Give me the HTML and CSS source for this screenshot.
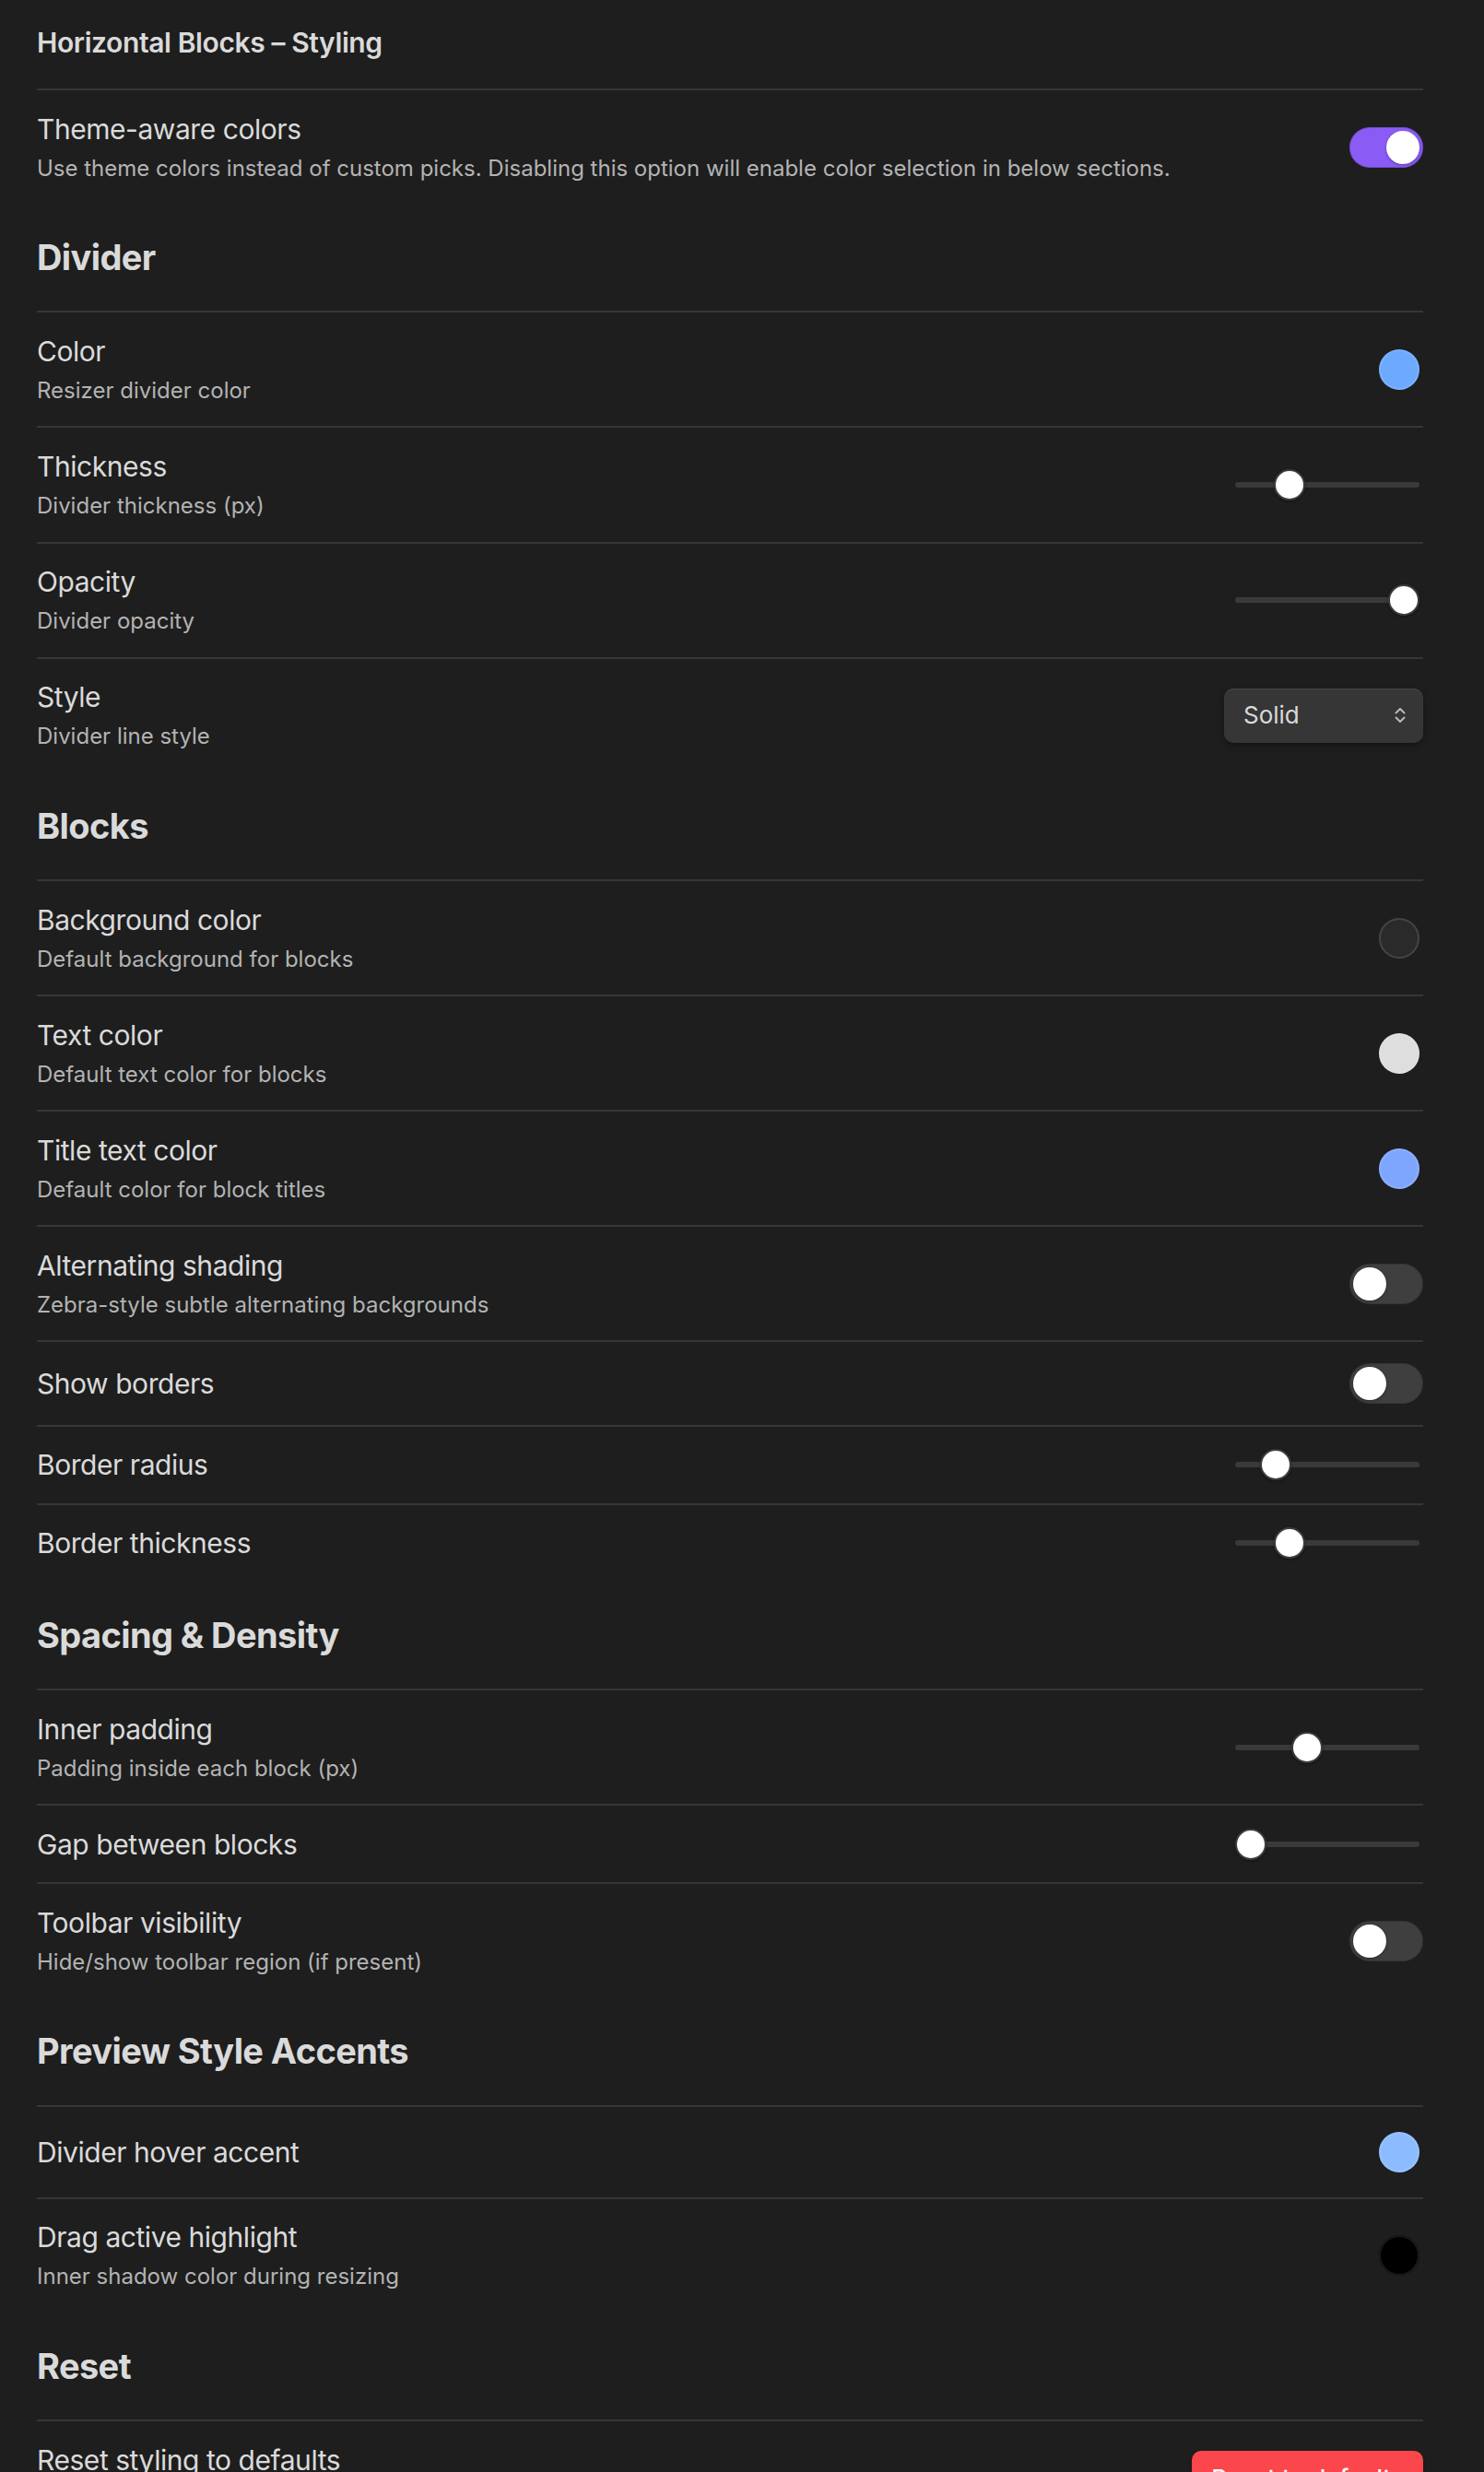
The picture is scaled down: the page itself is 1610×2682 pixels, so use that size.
FILE: index.html
```html
<!DOCTYPE html>
<html lang="en">
<head>
<meta charset="utf-8">
<title>Horizontal Blocks – Styling</title>
<link rel="stylesheet" href="styles.css">
</head>
<body>
<div class="settings">
  <h2 class="page-title">Horizontal Blocks – Styling</h2>

  <div class="item">
    <div class="info">
      <div class="name">Theme-aware colors</div>
      <div class="desc">Use theme colors instead of custom picks. Disabling this option will enable color selection in below sections.</div>
    </div>
    <div class="control"><div class="toggle on"><span class="knob"></span></div></div>
  </div>

  <div class="heading">Divider</div>

  <div class="item">
    <div class="info">
      <div class="name">Color</div>
      <div class="desc">Resizer divider color</div>
    </div>
    <div class="control"><div class="swatch-wrap"><span class="swatch sw-blue"></span></div></div>
  </div>

  <div class="item">
    <div class="info">
      <div class="name">Thickness</div>
      <div class="desc">Divider thickness (px)</div>
    </div>
    <div class="control"><div class="slider" style="--v:0.253"><span class="track"></span><span class="thumb"></span></div></div>
  </div>

  <div class="item">
    <div class="info">
      <div class="name">Opacity</div>
      <div class="desc">Divider opacity</div>
    </div>
    <div class="control"><div class="slider" style="--v:1"><span class="track"></span><span class="thumb"></span></div></div>
  </div>

  <div class="item">
    <div class="info">
      <div class="name">Style</div>
      <div class="desc">Divider line style</div>
    </div>
    <div class="control">
      <div class="dropdown">
        <span class="dropdown-value">Solid</span>
        <svg class="chev" width="14" height="20" viewBox="0 0 14 20" aria-hidden="true">
          <path d="M2.5 7.5 L7 3 L11.5 7.5" fill="none" stroke="#b8b8b8" stroke-width="2" stroke-linecap="round" stroke-linejoin="round"/>
          <path d="M2.5 12.5 L7 17 L11.5 12.5" fill="none" stroke="#b8b8b8" stroke-width="2" stroke-linecap="round" stroke-linejoin="round"/>
        </svg>
      </div>
    </div>
  </div>

  <div class="heading">Blocks</div>

  <div class="item">
    <div class="info">
      <div class="name">Background color</div>
      <div class="desc">Default background for blocks</div>
    </div>
    <div class="control"><div class="swatch-wrap"><span class="swatch sw-dark"></span></div></div>
  </div>

  <div class="item">
    <div class="info">
      <div class="name">Text color</div>
      <div class="desc">Default text color for blocks</div>
    </div>
    <div class="control"><div class="swatch-wrap"><span class="swatch sw-light"></span></div></div>
  </div>

  <div class="item">
    <div class="info">
      <div class="name">Title text color</div>
      <div class="desc">Default color for block titles</div>
    </div>
    <div class="control"><div class="swatch-wrap"><span class="swatch sw-periwinkle"></span></div></div>
  </div>

  <div class="item">
    <div class="info">
      <div class="name">Alternating shading</div>
      <div class="desc">Zebra-style subtle alternating backgrounds</div>
    </div>
    <div class="control"><div class="toggle"><span class="knob"></span></div></div>
  </div>

  <div class="item">
    <div class="info">
      <div class="name">Show borders</div>
    </div>
    <div class="control"><div class="toggle"><span class="knob"></span></div></div>
  </div>

  <div class="item">
    <div class="info">
      <div class="name">Border radius</div>
    </div>
    <div class="control"><div class="slider" style="--v:0.163"><span class="track"></span><span class="thumb"></span></div></div>
  </div>

  <div class="item">
    <div class="info">
      <div class="name">Border thickness</div>
    </div>
    <div class="control"><div class="slider" style="--v:0.25"><span class="track"></span><span class="thumb"></span></div></div>
  </div>

  <div class="heading">Spacing &amp; Density</div>

  <div class="item">
    <div class="info">
      <div class="name">Inner padding</div>
      <div class="desc">Padding inside each block (px)</div>
    </div>
    <div class="control"><div class="slider" style="--v:0.367"><span class="track"></span><span class="thumb"></span></div></div>
  </div>

  <div class="item">
    <div class="info">
      <div class="name">Gap between blocks</div>
    </div>
    <div class="control"><div class="slider" style="--v:0"><span class="track"></span><span class="thumb"></span></div></div>
  </div>

  <div class="item">
    <div class="info">
      <div class="name">Toolbar visibility</div>
      <div class="desc">Hide/show toolbar region (if present)</div>
    </div>
    <div class="control"><div class="toggle"><span class="knob"></span></div></div>
  </div>

  <div class="heading">Preview Style Accents</div>

  <div class="item">
    <div class="info">
      <div class="name">Divider hover accent</div>
    </div>
    <div class="control"><div class="swatch-wrap"><span class="swatch sw-sky"></span></div></div>
  </div>

  <div class="item">
    <div class="info">
      <div class="name">Drag active highlight</div>
      <div class="desc">Inner shadow color during resizing</div>
    </div>
    <div class="control"><div class="swatch-wrap"><span class="swatch sw-black"></span></div></div>
  </div>

  <div class="heading">Reset</div>

  <div class="item">
    <div class="info">
      <div class="name">Reset styling to defaults</div>
      <div class="desc">Restore all styling options to their default values</div>
    </div>
    <div class="control"><button class="btn-danger" type="button">Reset to defaults</button></div>
  </div>
</div>
</body>
</html>
```

FILE: styles.css
```css
html, body {
  margin: 0;
  padding: 0;
  background: #1e1e1e;
}

body {
  font-family: Inter, "Noto Sans", "Liberation Sans", sans-serif;
  color: #dadada;
  -webkit-font-smoothing: antialiased;
}

.settings {
  width: 1504px;
  margin-left: 40px;
}

.page-title {
  margin: 0;
  padding: 28px 0 32px;
  font-size: 30px;
  line-height: 36px;
  font-weight: 600;
  letter-spacing: -0.4px;
  color: #dadada;
}

.item {
  display: flex;
  align-items: center;
  border-top: 2px solid #363636;
  padding: 22.55px 0;
}

.info {
  flex: 1 1 auto;
  min-width: 0;
  margin-right: 30px;
}

.name {
  font-size: 30px;
  line-height: 38px;
  letter-spacing: -0.45px;
  color: #dadada;
}

.desc {
  font-size: 24px;
  line-height: 33px;
  padding-top: 7px;
  color: #b3b3b3;
}

.heading {
  font-size: 38px;
  line-height: 46px;
  font-weight: 700;
  letter-spacing: -0.6px;
  padding: 35.15px 0;
  color: #dadada;
}

.control {
  flex: 0 0 auto;
  display: flex;
  align-items: center;
  justify-content: flex-end;
}

/* toggle */
.toggle {
  position: relative;
  width: 80px;
  height: 44px;
  border-radius: 22px;
  background: #3f3f3f;
  box-shadow: inset 0 0 0 1px rgba(0, 0, 0, 0.15);
}

.toggle .knob {
  position: absolute;
  top: 4px;
  left: 4px;
  width: 36px;
  height: 36px;
  border-radius: 50%;
  background: #ffffff;
  box-shadow: 0 1px 3px rgba(0, 0, 0, 0.35);
}

.toggle.on {
  background: #8a5cf5;
}

.toggle.on .knob {
  left: 40px;
}

/* color swatch */
.swatch-wrap {
  height: 53px;
  display: flex;
  align-items: center;
  padding-right: 4px;
}

.swatch {
  display: block;
  width: 44px;
  height: 44px;
  border-radius: 50%;
  box-sizing: border-box;
  box-shadow: inset 0 0 0 2px rgba(255, 255, 255, 0.1);
}

.sw-blue { background: #6daaff; }
.sw-dark { background: #2a2a2a; box-shadow: inset 0 0 0 2px #444444; }
.sw-light { background: #dedede; }
.sw-periwinkle { background: #7fa6ff; }
.sw-sky { background: #8cbcff; }
.sw-black { background: #000000; box-shadow: inset 0 0 0 2px #1a1a1a; }

/* slider */
.slider {
  position: relative;
  width: 200px;
  height: 34px;
  margin-right: 4px;
}

.slider .track {
  position: absolute;
  left: 0;
  right: 0;
  top: 14px;
  height: 6px;
  border-radius: 3px;
  background: #3a3a3a;
}

.slider .thumb {
  position: absolute;
  top: 0;
  left: calc(var(--v) * (100% - 34px));
  width: 34px;
  height: 34px;
  box-sizing: border-box;
  border-radius: 50%;
  background: #ffffff;
  border: 2px solid #3c3c3c;
  box-shadow: 0 1px 3px rgba(0, 0, 0, 0.4);
}

/* dropdown */
.dropdown {
  width: 216px;
  height: 59px;
  box-sizing: border-box;
  display: flex;
  align-items: center;
  justify-content: space-between;
  padding: 0 18px 0 21px;
  border-radius: 10px;
  background: #363636;
  box-shadow: inset 0 1px 1px rgba(255, 255, 255, 0.09), 0 3px 8px rgba(0, 0, 0, 0.2), 0 2px 3px rgba(0, 0, 0, 0.15);
}

.dropdown-value {
  font-size: 26px;
  line-height: 32px;
  color: #dadada;
}

.chev {
  display: block;
}

/* button */
.btn-danger {
  height: 60px;
  padding: 0 21px;
  border: none;
  border-radius: 10px;
  background: #fb464c;
  color: #ffffff;
  font-family: inherit;
  font-size: 26px;
  font-weight: 500;
  box-shadow: 0 2px 4px rgba(0, 0, 0, 0.2);
}
```
